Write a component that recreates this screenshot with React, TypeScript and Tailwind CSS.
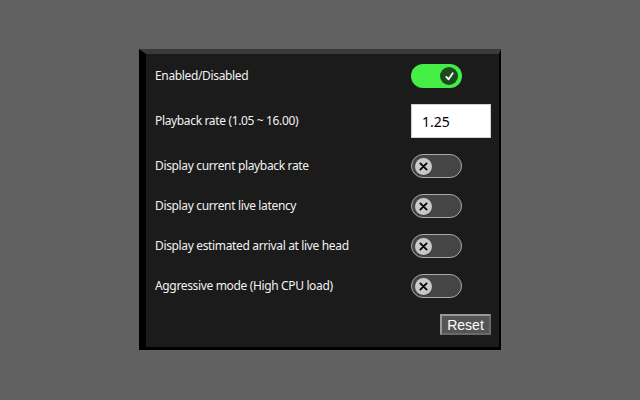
import { useState } from "react";

type Row = { label: string; on: boolean };

const Toggle = ({ on, onClick }: { on: boolean; onClick: () => void }) => {
  if (on) {
    return (
      <button
        onClick={onClick}
        className="flex h-[24px] w-[51px] items-center justify-end rounded-full bg-[#44ee44] pr-[4px]"
      >
        <span className="flex h-[18px] w-[18px] items-center justify-center rounded-full bg-[#1b4a20]">
          <svg width="11" height="11" viewBox="0 0 12 12" fill="none">
            <path d="M2.5 6.5 L5 9 L9.5 2.5" stroke="#ffffff" strokeWidth="2" strokeLinecap="round" strokeLinejoin="round" />
          </svg>
        </span>
      </button>
    );
  }
  return (
    <button
      onClick={onClick}
      className="flex h-[24px] w-[51px] items-center rounded-full border border-[#a8a8a8] bg-[#454545] pl-[3px]"
    >
      <span className="flex h-[17px] w-[17px] items-center justify-center rounded-full bg-[#c9c9c9]">
        <svg width="9" height="9" viewBox="0 0 10 10" fill="none">
          <path d="M1.5 1.5 L8.5 8.5 M8.5 1.5 L1.5 8.5" stroke="#000000" strokeWidth="2" strokeLinecap="round" />
        </svg>
      </span>
    </button>
  );
};

export default function App() {
  const [enabled, setEnabled] = useState(true);
  const [rate, setRate] = useState("1.25");
  const [rows, setRows] = useState<Row[]>([
    { label: "Display current playback rate", on: false },
    { label: "Display current live latency", on: false },
    { label: "Display estimated arrival at live head", on: false },
    { label: "Aggressive mode (High CPU load)", on: false },
  ]);

  const flip = (i: number) =>
    setRows((r) => r.map((x, j) => (j === i ? { ...x, on: !x.on } : x)));

  return (
    <div className="flex h-[400px] w-[640px] items-start justify-center bg-[#616161] pt-[49px] font-['Noto_Sans',sans-serif]">
      <div className="w-[362px] border-t-[5px] border-r-2 border-b-[3px] border-l-[7px] border-t-[#3a3a3a] border-r-black border-b-black border-l-black bg-[#1b1b1b] pt-[10px] pr-[8px] pb-[12px] pl-[9px] text-[12px] tracking-[-0.35px] text-[#f2f2f2]">
        <div className="flex flex-col gap-[16px]">
          <div className="flex items-center justify-between">
            <span>Enabled/Disabled</span>
            <div className="w-[80px]">
              <Toggle on={enabled} onClick={() => setEnabled(!enabled)} />
            </div>
          </div>
          <div className="flex items-center justify-between">
            <span>Playback rate (1.05 ~ 16.00)</span>
            <input
              value={rate}
              onChange={(e) => setRate(e.target.value)}
              className="h-[34px] w-[80px] border border-[#cfcfcf] bg-white pl-[10px] text-[14px] tracking-normal text-black outline-none"
            />
          </div>
          {rows.map((r, i) => (
            <div key={r.label} className="flex items-center justify-between">
              <span>{r.label}</span>
              <div className="w-[80px]">
                <Toggle on={r.on} onClick={() => flip(i)} />
              </div>
            </div>
          ))}
          <div className="flex justify-end">
            <button className="h-[21px] w-[51px] border-2 border-t-[#9a9a9a] border-l-[#9a9a9a] border-r-[#6a6a6a] border-b-[#6a6a6a] bg-[#555555] font-['Liberation_Sans',sans-serif] text-[14px] leading-none tracking-normal text-white">
              Reset
            </button>
          </div>
        </div>
      </div>
    </div>
  );
}
